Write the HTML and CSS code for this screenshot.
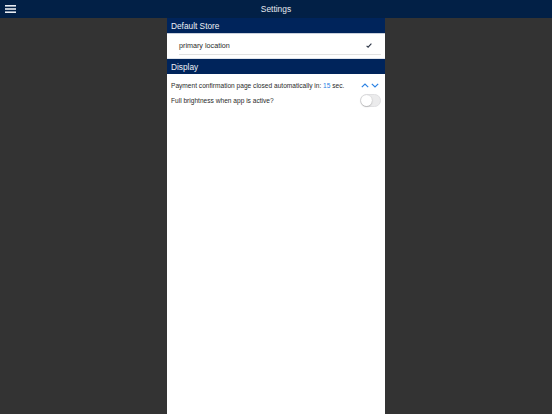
FILE: index.html
```html
<!DOCTYPE html>
<html>
<head>
<meta charset="utf-8">
<link rel="stylesheet" href="styles.css">
</head>
<body>
<header class="topbar">
  <div class="menu">
    <svg width="11" height="8" viewBox="0 0 11 8"><rect x="0" y="0" width="11" height="1.6" fill="#e8ecf2"/><rect x="0" y="3.2" width="11" height="1.6" fill="#e8ecf2"/><rect x="0" y="6.4" width="11" height="1.6" fill="#e8ecf2"/></svg>
  </div>
  <div class="title">Settings</div>
</header>
<main class="page">
  <section class="panel">
    <div class="section-head first">Default Store</div>
    <div class="store-row">
      <span class="store-name">primary location</span>
      <svg class="check" width="6" height="5" viewBox="0 0 6 5"><path d="M0.6 2.8 L2.1 4.2 L5.4 0.6" fill="none" stroke="#2b3445" stroke-width="1.1"/></svg>
    </div>
    <div class="section-head">Display</div>
    <div class="opt-row">
      <span class="opt-text">Payment confirmation page closed automatically in: <span class="num">15</span> sec.</span>
      <div class="arrows">
        <svg width="8" height="5" viewBox="0 0 8 5"><path d="M0.8 4.2 L4 1 L7.2 4.2" fill="none" stroke="#2a82e4" stroke-width="1.2"/></svg>
        <svg width="8" height="5" viewBox="0 0 8 5"><path d="M0.8 0.8 L4 4 L7.2 0.8" fill="none" stroke="#2a82e4" stroke-width="1.2"/></svg>
      </div>
    </div>
    <div class="opt-row">
      <span class="opt-text">Full brightness when app is active?</span>
      <div class="toggle"><div class="knob"></div></div>
    </div>
  </section>
</main>
</body>
</html>
```
FILE: styles.css
```css
* { box-sizing: border-box; }
html, body { margin: 0; padding: 0; height: 100%; }
body {
  background: #333333;
  font-family: "Liberation Sans", Arial, sans-serif;
  display: flex;
  flex-direction: column;
}
.topbar {
  height: 18px;
  background: #022046;
  display: flex;
  align-items: center;
  position: relative;
  flex: none;
}
.menu {
  padding-left: 5px;
  display: flex;
  align-items: center;
  height: 18px;
}
.menu svg { display: block; }
.title {
  position: absolute;
  left: 0;
  right: 0;
  top: 0;
  line-height: 19px;
  text-align: center;
  color: #e6eaf0;
  font-size: 8.4px;
}
.page {
  flex: 1;
  display: flex;
  justify-content: center;
}
.panel {
  width: 218px;
  background: #ffffff;
}
.section-head {
  height: 16px;
  background: #00245b;
  color: #eef1f6;
  font-size: 8.3px;
  line-height: 16px;
  padding-left: 4px;
  border-top: 1px solid #dfe4ec;
}
.section-head.first {
  border-top: none;
  height: 16px;
  line-height: 16px;
  border-bottom: 1px solid #c9d0dc;
}
.store-row {
  margin: 0 4px 3px 12px;
  height: 21px;
  padding-top: 2px;
  border-bottom: 1px solid #e2e2e2;
  display: flex;
  align-items: center;
  justify-content: space-between;
  padding-right: 9px;
}
.store-name {
  font-size: 7.2px;
  color: #2a2a2a;
}
.check { display: block; }
.opt-row {
  display: flex;
  align-items: center;
  justify-content: space-between;
  padding: 0 4px 0 4px;
  height: 15px;
}
.section-head + .opt-row { margin-top: 4px; }
.opt-text {
  font-size: 6.6px;
  color: #2a2a2a;
}
.num { color: #2a82e4; }
.arrows {
  display: flex;
  gap: 2px;
  padding-right: 2px;
}
.arrows svg { display: block; }
.toggle {
  width: 21px;
  height: 13px;
  border-radius: 7px;
  background: #ebebec;
  border: 1px solid #e0e0e2;
  position: relative;
}
.knob {
  position: absolute;
  left: 0;
  top: 0;
  width: 11px;
  height: 11px;
  border-radius: 50%;
  background: #ffffff;
  box-shadow: 0 0.5px 1.5px rgba(0,0,0,0.35);
}
```
